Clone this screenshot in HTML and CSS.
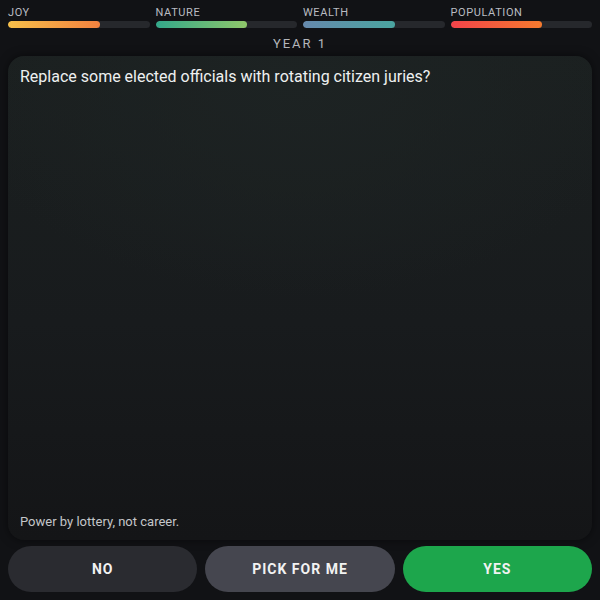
FILE: index.html
```html
<!DOCTYPE html>
<html>
<head>
<meta charset="utf-8">
<link rel="stylesheet" href="styles.css">
</head>
<body>
<div class="app">
  <div class="stats">
    <div class="stat">
      <div class="label">JOY</div>
      <div class="track"><div class="fill joy" style="width:65%"></div></div>
    </div>
    <div class="stat">
      <div class="label">NATURE</div>
      <div class="track"><div class="fill nature" style="width:65%"></div></div>
    </div>
    <div class="stat">
      <div class="label">WEALTH</div>
      <div class="track"><div class="fill wealth" style="width:65%"></div></div>
    </div>
    <div class="stat">
      <div class="label">POPULATION</div>
      <div class="track"><div class="fill pop" style="width:65%"></div></div>
    </div>
  </div>
  <div class="year">YEAR 1</div>
  <div class="card">
    <div class="question">Replace some elected officials with rotating citizen juries?</div>
    <div class="hint">Power by lottery, not career.</div>
  </div>
  <div class="actions">
    <button class="btn no">NO</button>
    <button class="btn pick">PICK FOR ME</button>
    <button class="btn yes">YES</button>
  </div>
</div>
</body>
</html>
```
FILE: styles.css
```css
* { box-sizing: border-box; }
html, body { margin: 0; padding: 0; background: #111215; }
body { font-family: Roboto, "Noto Sans", sans-serif; color: #eee; }
.app {
  height: 600px;
  display: flex;
  flex-direction: column;
  padding: 6px 8px 8px;
}
.stats {
  display: grid;
  grid-template-columns: repeat(4, 1fr);
  column-gap: 6px;
}
.label {
  font-size: 11px;
  line-height: 13px;
  letter-spacing: 0.6px;
  color: #b9bcc2;
  margin-bottom: 2px;
}
.track {
  height: 7px;
  border-radius: 4px;
  background: #26282c;
  overflow: hidden;
}
.fill { height: 100%; border-radius: 4px; }
.fill.joy { background: linear-gradient(90deg, #f7c04a, #f2813f); }
.fill.nature { background: linear-gradient(90deg, #33a88a, #8fc76a); }
.fill.wealth { background: linear-gradient(90deg, #6689ad, #4aa5a0); }
.fill.pop { background: linear-gradient(90deg, #f2434a, #f57a2e); }
.year {
  text-align: center;
  font-size: 13px;
  line-height: 15px;
  letter-spacing: 2px;
  color: #b4b7bc;
  margin-top: 8px;
}
.card {
  flex: 1;
  margin-top: 5px;
  border-radius: 16px;
  background: radial-gradient(ellipse 60% 45% at 50% 5%, #1d2323 0%, rgba(29,35,35,0) 100%),
              linear-gradient(180deg, #1b2020 0%, #181b1d 55%, #141517 100%);
  box-shadow: 0 0 10px rgba(0,0,0,0.5);
  display: flex;
  flex-direction: column;
  justify-content: space-between;
  padding: 11px 12px 10px;
}
.question {
  font-size: 16px;
  line-height: 20px;
  color: #eef0f0;
}
.hint {
  font-size: 13px;
  line-height: 17px;
  color: #c4c6c9;
}
.actions {
  display: grid;
  grid-template-columns: repeat(3, 1fr);
  column-gap: 8px;
  margin-top: 6px;
}
.btn {
  height: 46px;
  border: none;
  border-radius: 23px;
  font-family: Roboto, "Noto Sans", sans-serif;
  font-weight: 700;
  font-size: 14px;
  letter-spacing: 1px;
  color: #f2f2f2;
}
.btn.no { background: #2a2b30; }
.btn.pick { background: #45464f; }
.btn.yes { background: #1da64c; }
```
